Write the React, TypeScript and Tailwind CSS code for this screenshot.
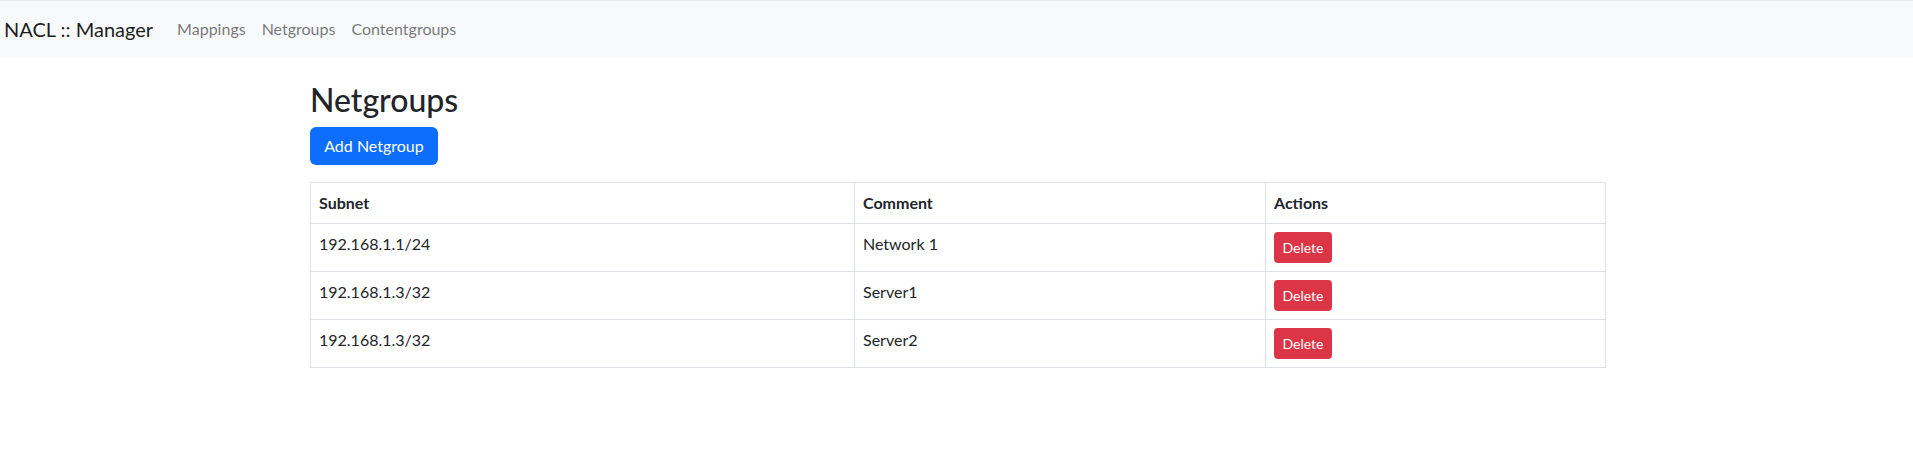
import React from "react";

const rows = [
  { subnet: "192.168.1.1/24", comment: "Network 1" },
  { subnet: "192.168.1.3/32", comment: "Server1" },
  { subnet: "192.168.1.3/32", comment: "Server2" },
];

export default function App() {
  return (
    <div
      className="min-h-[456px] bg-white text-[#212529] text-[16px] leading-[1.5]"
      style={{ fontFamily: '"Lato", "Open Sans", sans-serif' }}
    >
      <nav className="h-[57px] border-t border-[#e9ecef] bg-[#f8f9fa] flex items-center pl-[4px]">
        <span className="text-[20px] leading-[30px] text-[rgba(0,0,0,0.9)] mr-[16px]">
          NACL :: Manager
        </span>
        <div className="flex">
          {["Mappings", "Netgroups", "Contentgroups"].map((l) => (
            <span key={l} className="px-[8px] leading-[24px] text-[rgba(0,0,0,0.55)]">
              {l}
            </span>
          ))}
        </div>
      </nav>
      <main className="w-[1320px] ml-[298px] px-[12px] mt-[24px]">
        <h2 className="text-[32px] leading-[1.2] font-medium mb-[8px]">Netgroups</h2>
        <button className="h-[38px] w-[128px] rounded-[6px] bg-[#0d6efd] text-white text-[16px] leading-[24px] text-center">
          Add Netgroup
        </button>
        <table className="mt-[17px] w-[1296px] border-collapse border border-[#dee2e6]">
          <thead>
            <tr>
              <th className="w-[544px] border border-[#dee2e6] p-[8px] text-left font-bold leading-[24px]">Subnet</th>
              <th className="w-[411px] border border-[#dee2e6] p-[8px] text-left font-bold leading-[24px]">Comment</th>
              <th className="border border-[#dee2e6] p-[8px] text-left font-bold leading-[24px]">Actions</th>
            </tr>
          </thead>
          <tbody>
            {rows.map((r, i) => (
              <tr key={i}>
                <td className="border border-[#dee2e6] p-[8px] align-top leading-[24px]">{r.subnet}</td>
                <td className="border border-[#dee2e6] p-[8px] align-top leading-[24px]">{r.comment}</td>
                <td className="border border-[#dee2e6] p-[8px] align-top">
                  <button className="h-[31px] w-[58px] rounded-[4px] bg-[#dc3545] text-white text-[14px] leading-[21px] text-center">
                    Delete
                  </button>
                </td>
              </tr>
            ))}
          </tbody>
        </table>
      </main>
    </div>
  );
}
